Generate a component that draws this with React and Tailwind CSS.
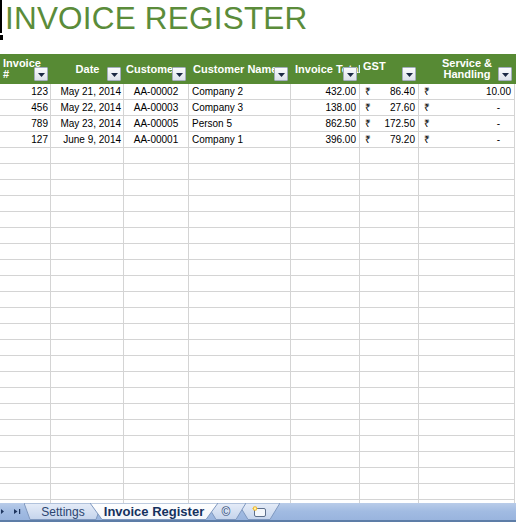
import React from 'react';

const rows = [
  ['123', 'May 21, 2014', 'AA-00002', 'Company 2', '432.00', '86.40', '10.00'],
  ['456', 'May 22, 2014', 'AA-00003', 'Company 3', '138.00', '27.60', '-'],
  ['789', 'May 23, 2014', 'AA-00005', 'Person 5', '862.50', '172.50', '-'],
  ['127', 'June 9, 2014', 'AA-00001', 'Company 1', '396.00', '79.20', '-'],
];

const EMPTY_ROWS = 23;
const cols = 'grid grid-cols-[51px_73px_65px_102px_69px_59px_96px]';
const cell = 'h-[16px] border-r border-b border-[#d4d4d4] leading-[15px] whitespace-nowrap overflow-hidden';

// little autofilter dropdown sitting in the corner of a header cell
function FilterButton() {
  return (
    <span className="absolute right-[3px] bottom-[3px] w-[14px] h-[14px] border border-[#a3adbc] rounded-[1px] bg-linear-to-b from-[#fbfcfd] to-[#dde2ea] flex items-center justify-center pt-[2px]">
      <svg width="7" height="4" viewBox="0 0 7 4">
        <path d="M0 0h7L3.5 4z" fill="#1b2944" />
      </svg>
    </span>
  );
}

function Money({ value }) {
  return (
    <>
      <span>₹</span>
      <span className={value === '-' ? 'mr-[11px]' : ''}>{value}</span>
    </>
  );
}

function SheetTab({ width, slant, active, className = '', children }) {
  const h = 17;
  return (
    <div className={`relative shrink-0 h-[17px] flex items-center justify-center ${className}`} style={{ width }}>
      <svg className="absolute inset-0" width={width} height={h} viewBox={`0 0 ${width} ${h}`}>
        <defs>
          <linearGradient id={`tab-${width}`} x1="0" y1="0" x2="0" y2="1">
            <stop offset="0" stopColor={active ? '#ffffff' : '#e6edf8'} />
            <stop offset="1" stopColor={active ? '#f3f6fb' : '#c5d4ec'} />
          </linearGradient>
        </defs>
        <polygon
          points={`0,0 ${width},0 ${width - slant},${h - 0.5} ${slant},${h - 0.5}`}
          fill={`url(#tab-${width})`}
          stroke="#7f98bf"
          strokeWidth="1"
        />
      </svg>
      <span className="relative">{children}</span>
    </div>
  );
}

export default function App() {
  return (
    <div className="w-[516px] h-[522px] bg-white overflow-hidden font-['Liberation_Sans',Arial,sans-serif] flex flex-col">
      {/* title */}
      <div className="h-[54px] flex shrink-0">
        <div className="w-[2px] flex flex-col">
          <div className="h-[33px] w-[2px] bg-black" />
          <div className="mt-[2px] h-[5px] w-[3px] bg-black" />
        </div>
        <div className="pl-[3px] pt-[3px] text-[31.5px] leading-none text-[#5b8c3a] tracking-[0.2px]">
          INVOICE REGISTER
        </div>
      </div>

      {/* header row */}
      <div className={`${cols} h-[30px] shrink-0 bg-[#578a34] text-white font-bold text-[11px]`}>
        <div className="relative pl-[3px] pt-[4px] leading-[11px]">
          Invoice
          <br />#
          <FilterButton />
        </div>
        <div className="relative flex items-center justify-center pt-[1px]">
          Date
          <FilterButton />
        </div>
        <div className="relative flex items-center pl-[2px] whitespace-nowrap overflow-hidden pt-[1px]">
          Customer
          <FilterButton />
        </div>
        <div className="relative flex items-center pl-[4px] whitespace-nowrap overflow-hidden pt-[1px]">
          Customer Name
          <FilterButton />
        </div>
        <div className="relative flex items-center pl-[4px] whitespace-nowrap overflow-hidden pt-[1px]">
          Invoice Total
          <FilterButton />
        </div>
        <div className="relative pl-[3px] pt-[7px] leading-[11px]">
          GST
          <FilterButton />
        </div>
        <div className="relative text-center leading-[11px] pt-[4px]">
          Service &amp;
          <br />
          Handling
          <FilterButton />
        </div>
      </div>

      {/* sheet body */}
      <div className="h-[419px] overflow-hidden text-[10px] text-black">
        {rows.map((r) => (
          <div key={r[0]} className={cols}>
            <div className={`${cell} text-right pr-[2px]`}>{r[0]}</div>
            <div className={`${cell} text-right pr-[2px]`}>{r[1]}</div>
            <div className={`${cell} text-center`}>{r[2]}</div>
            <div className={`${cell} pl-[3px]`}>{r[3]}</div>
            <div className={`${cell} text-right pr-[3px]`}>{r[4]}</div>
            <div className={`${cell} flex justify-between pl-[5px] pr-[3px]`}>
              <Money value={r[5]} />
            </div>
            <div className={`${cell} flex justify-between pl-[5px] pr-[3px]`}>
              <Money value={r[6]} />
            </div>
          </div>
        ))}
        {Array.from({ length: EMPTY_ROWS }).map((_, i) => (
          <div key={i} className={cols}>
            {Array.from({ length: 7 }).map((__, j) => (
              <div key={j} className={cell} />
            ))}
          </div>
        ))}
      </div>

      {/* sheet tabs */}
      <div className="h-[19px] shrink-0 flex items-start bg-linear-to-b from-[#b9cce9] via-[#a1bbe2] to-[#99b4de] border-b-2 border-[#5d7da7]">
        <div className="w-[24px] h-[17px] flex items-center">
          <svg width="24" height="17" viewBox="0 0 24 17">
            <path d="M1 6l3 2.5L1 11z" fill="#1e355e" />
            <path d="M14 6l3.5 2.5L14 11z" fill="#1e355e" />
            <rect x="19" y="6" width="1.2" height="5" fill="#1e355e" />
          </svg>
        </div>
        <SheetTab width={78} slant={6} className="text-[12px] text-[#2b4470]">
          Settings
        </SheetTab>
        <SheetTab width={128} slant={12} active className="-ml-[12px] z-20 text-[13px] font-bold text-[#15315e]">
          Invoice Register
        </SheetTab>
        <SheetTab width={40} slant={10} className="-ml-[12px] z-10 text-[12px] text-[#2b4470]">
          ©
        </SheetTab>
        <SheetTab width={42} slant={10} className="-ml-[8px]">
          <svg width="16" height="13" viewBox="0 0 16 13">
            <rect x="3.5" y="3.5" width="11" height="8" rx="1.5" fill="#f4f7fb" stroke="#5d6f8c" />
            <path d="M4 1v5M1.5 3.5h5M2.3 1.8l3.4 3.4M5.7 1.8L2.3 5.2" stroke="#f2b51e" strokeWidth="1.2" />
            <circle cx="4" cy="3.5" r="1.2" fill="#fff3b0" />
          </svg>
        </SheetTab>
      </div>
    </div>
  );
}
